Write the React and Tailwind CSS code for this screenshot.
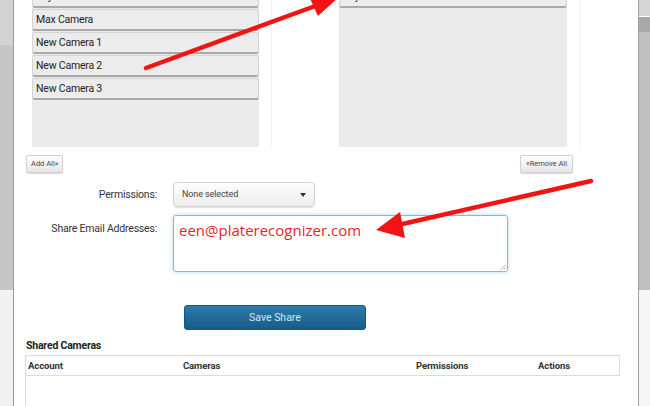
const leftItems = ['Max Camera', 'New Camera 1', 'New Camera 2', 'New Camera 3'];

function Item({ label }) {
  return (
    <div className="h-[22px] mb-[1px] flex items-center px-[3px] rounded-[3px] bg-[#ececec] border border-[#d4d4d4] border-b-[2px] border-b-[#a9a9a9] text-[10.5px] tracking-[-0.2px] text-[#222]">
      {label}
    </div>
  );
}

export default function App() {
  return (
    <div className="relative w-[650px] h-[406px] overflow-hidden flex bg-white" style={{ fontFamily: 'Roboto, "Liberation Sans", sans-serif' }}>
      {/* left backdrop */}
      <div className="w-[14px] flex flex-col border-r border-[#9a9a9a]">
        <div className="h-[45px] bg-[#d3d3d3]" />
        <div className="h-[245px] bg-[#c6c6c6]" />
        <div className="flex-1 bg-[#f1f1f1]" />
      </div>

      {/* modal */}
      <div className="flex-1 flex flex-col bg-white">
        <div className="-mt-[14px] flex pl-[12px]">
          <div className="w-[246px] h-[161px] border-r border-[#f2f2f2] pl-[6px] pr-[12px]">
            <div className="h-full bg-[#ebebeb]">
              <Item label="Bay Camera" />
              {leftItems.map((c) => (
                <Item key={c} label={c} />
              ))}
            </div>
          </div>
          <div className="ml-[61px] w-[247px] h-[161px] border-r border-[#f2f2f2] pl-[6px] pr-[12px]">
            <div className="h-full bg-[#ebebeb]">
              <Item label="Bay Camera" />
            </div>
          </div>
        </div>

        <div className="flex justify-between pl-[12px] pr-[65px] mt-[8px]">
          <button className="h-[18px] px-[4px] rounded-[2px] border border-[#d0d0d0] bg-gradient-to-b from-white to-[#e6e6e6] text-[7.5px] text-[#444] shadow-[0_1px_1px_rgba(0,0,0,0.15)]">
            Add All»
          </button>
          <button className="h-[18px] px-[5px] rounded-[2px] border border-[#d0d0d0] bg-gradient-to-b from-white to-[#e6e6e6] text-[7.5px] text-[#444] shadow-[0_1px_1px_rgba(0,0,0,0.15)]">
            «Remove All
          </button>
        </div>

        <div className="flex items-center mt-[9px]">
          <div className="w-[143px] text-right text-[10.5px] tracking-[-0.2px] text-[#333]">Permissions:</div>
          <div className="ml-[16px] w-[142px] h-[25px] rounded-[4px] border border-[#d2d2d2] bg-gradient-to-b from-white to-[#ececec] shadow-[0_1px_1px_rgba(0,0,0,0.12)] flex items-center justify-between px-[8px]">
            <span className="text-[9px] tracking-[-0.1px] text-[#444]">None selected</span>
            <span className="w-0 h-0 border-l-[3.5px] border-r-[3.5px] border-t-[4px] border-l-transparent border-r-transparent border-t-[#333]" />
          </div>
        </div>

        <div className="flex items-start mt-[8px]">
          <div className="w-[143px] text-right text-[10.5px] tracking-[-0.2px] text-[#333] mt-[6px]">Share Email Addresses:</div>
          <div className="relative ml-[16px] w-[335px] h-[57px] rounded-[3px] border border-[#86b7e3] shadow-[0_0_4px_rgba(82,168,236,0.45)] px-[5px] pt-[3px]">
            <span className="text-[15px] text-[#e3262d]" style={{ fontFamily: '"Open Sans", sans-serif' }}>
              een@platerecognizer.com
            </span>
            <svg className="absolute right-[1px] bottom-[1px]" width="6" height="6" viewBox="0 0 6 6">
              <path d="M1 5.5L5.5 1M3.5 5.5L5.5 3.5" stroke="#999" strokeWidth="0.8" />
            </svg>
          </div>
        </div>

        <div className="mt-[32px] ml-[170px]">
          <button className="w-[182px] h-[25px] rounded-[3px] bg-gradient-to-b from-[#2d7bab] to-[#195b87] border border-[#1a557e] text-[10.5px] text-[#d9e6ef]">
            Save Share
          </button>
        </div>

        <div className="mt-[8px] ml-[12px] text-[10.5px] tracking-[-0.2px] font-bold text-[#222]">Shared Cameras</div>

        <div className="ml-[11px] mr-[18px] mt-[1px] flex-1 border-l border-[#dcdcdc]">
          <div className="h-[21px] flex items-center border border-l-0 border-[#dcdcdc] text-[9.5px] tracking-[-0.1px] font-bold text-[#333]">
            <div className="w-[157px] pl-[2px]">Account</div>
            <div className="w-[233px]">Cameras</div>
            <div className="w-[122px]">Permissions</div>
            <div>Actions</div>
          </div>
        </div>
      </div>

      {/* right backdrop */}
      <div className="w-[12px] flex flex-col border-l border-[#a0a0a0]">
        <div className="h-[16px] bg-[#d6d6d6]" />
        <div className="h-[1px] bg-white" />
        <div className="h-[15px] bg-[#a9a9a9]" />
        <div className="h-[258px] bg-[#bfbfbf]" />
        <div className="flex-1 bg-[#f6f6f6]" />
      </div>

      {/* annotation arrows */}
      <svg className="absolute inset-0 pointer-events-none" width="650" height="406" viewBox="0 0 650 406">
        <line x1="146" y1="68" x2="318" y2="5" stroke="#f21414" strokeWidth="4.5" strokeLinecap="round" />
        <polygon points="340,-4 308,-6 318,16" fill="#f21414" />
        <line x1="591" y1="181" x2="398" y2="225" stroke="#f21414" strokeWidth="4.5" strokeLinecap="round" />
        <polygon points="376,230 400,212 405,238" fill="#f21414" />
      </svg>
    </div>
  );
}
